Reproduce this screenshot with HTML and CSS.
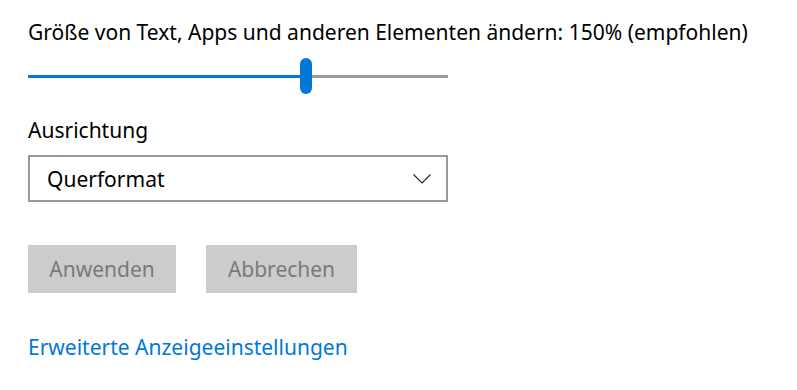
FILE: index.html
```html
<!DOCTYPE html>
<html lang="de">
<head>
<meta charset="utf-8">
<link rel="stylesheet" href="styles.css">
</head>
<body>
<div class="page">
  <div class="label title">Größe von Text, Apps und anderen Elementen ändern: 150% (empfohlen)</div>
  <div class="slider">
    <div class="track">
      <div class="fill"></div>
      <div class="rest"></div>
    </div>
    <div class="thumb"></div>
  </div>
  <div class="label orient">Ausrichtung</div>
  <div class="select">
    <span>Querformat</span>
    <svg class="chev" width="18" height="10" viewBox="0 0 18 10"><path d="M0.5 0.5 L9 9 L17.5 0.5" fill="none" stroke="#222" stroke-width="1.1"/></svg>
  </div>
  <div class="buttons">
    <div class="btn">Anwenden</div>
    <div class="btn">Abbrechen</div>
  </div>
  <a class="link" href="#">Erweiterte Anzeigeeinstellungen</a>
</div>
</body>
</html>
```
FILE: styles.css
```css
html, body { margin: 0; padding: 0; background: #fff; }
body { font-family: "Noto Sans", "Open Sans", sans-serif; color: #000; }
.page { padding: 18px 0 0 28px; display: flex; flex-direction: column; align-items: flex-start; }
.label { font-size: 21px; line-height: 28px; }
.slider { position: relative; width: 420px; height: 36px; margin-top: 12px; display: flex; align-items: center; }
.track { display: flex; width: 100%; height: 3px; }
.fill { width: 272px; background: #0078d7; }
.rest { flex: 1; background: #999; }
.thumb { position: absolute; left: 272px; top: 0; width: 12px; height: 36px; border-radius: 6px; background: #0078d7; }
.orient { margin-top: 22px; }
.select { box-sizing: border-box; width: 420px; height: 47px; margin-top: 11px; border: 2px solid #999; display: flex; align-items: center; justify-content: space-between; padding: 0 15px 0 17px; font-size: 21px; }
.chev { margin-top: 1px; }
.buttons { display: flex; gap: 30px; margin-top: 43px; }
.btn { background: #ccc; color: #7a7a7a; font-size: 21px; height: 48px; display: flex; align-items: center; justify-content: center; }
.btn:first-child { width: 148px; }
.btn:last-child { width: 151px; }
.link { margin-top: 40px; color: #0078d7; text-decoration: none; font-size: 21px; line-height: 28px; }
```
